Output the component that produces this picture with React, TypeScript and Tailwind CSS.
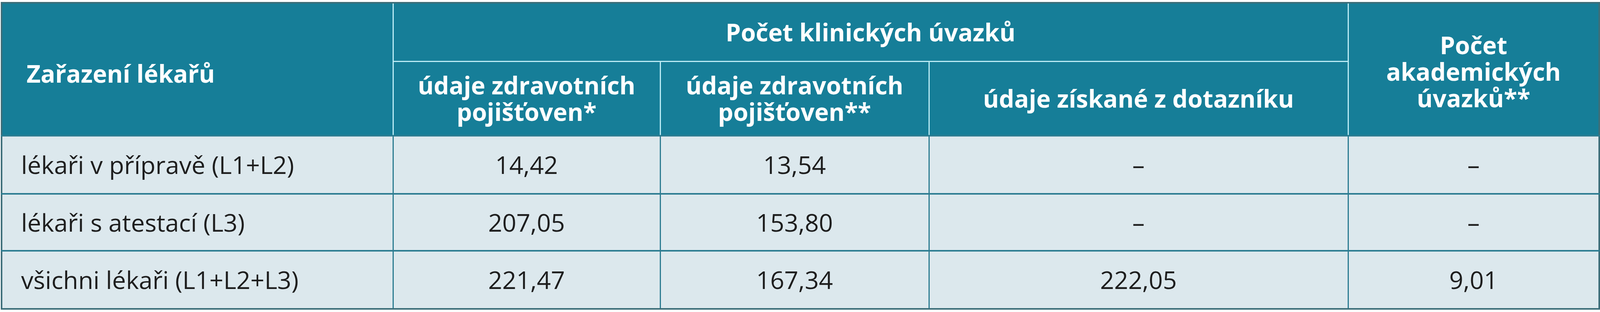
import React from "react";

const ROWS = [
  { label: "lékaři v přípravě (L1+L2)", a: "14,42", b: "13,54", c: "–", d: "–" },
  { label: "lékaři s atestací (L3)", a: "207,05", b: "153,80", c: "–", d: "–" },
  { label: "všichni lékaři (L1+L2+L3)", a: "221,47", b: "167,34", c: "222,05", d: "9,01" },
];

const head = "bg-[#167e98] text-white font-bold text-[62px] border-[3px] border-[#bcecf5] text-center align-middle leading-[68px]";
const cell = "border-[3px] border-t-[4px] border-[#2c7c91] bg-[#dce8ed] text-[#1e1e1e] text-[63px] text-center align-middle";

export default function App() {
  return (
    <div className="min-h-[800px] bg-white pt-[5px] pl-[2px]" style={{ fontFamily: "'Open Sans', 'Noto Sans', sans-serif" }}>
      <table className="w-[4090px] border-collapse border-[4px] border-[#3d6e79] table-fixed">
        <colgroup>
          <col className="w-[1002px]" />
          <col className="w-[684px]" />
          <col className="w-[688px]" />
          <col className="w-[1073px]" />
          <col className="w-[643px]" />
        </colgroup>
        <thead>
          <tr className="h-[150px]">
            <th rowSpan={2} className={`${head} text-left pl-[62px] pt-[20px]`}>Zařazení lékařů</th>
            <th colSpan={3} className={head}>Počet klinických úvazků</th>
            <th rowSpan={2} className={`${head} pt-[10px]`}>Počet<br />akademických<br />úvazků**</th>
          </tr>
          <tr className="h-[191px]">
            <th className={head}>údaje zdravotních<br />pojišťoven*</th>
            <th className={head}>údaje zdravotních<br />pojišťoven**</th>
            <th className={head}>údaje získané z dotazníku</th>
          </tr>
        </thead>
        <tbody>
          {ROWS.map((r, i) => (
            <tr key={i} className={i === 1 ? "h-[146px]" : "h-[149px]"}>
              <td className={`${cell} text-left pl-[48px]`}>{r.label}</td>
              <td className={cell}>{r.a}</td>
              <td className={cell}>{r.b}</td>
              <td className={cell}>{r.c}</td>
              <td className={cell}>{r.d}</td>
            </tr>
          ))}
        </tbody>
      </table>
    </div>
  );
}
